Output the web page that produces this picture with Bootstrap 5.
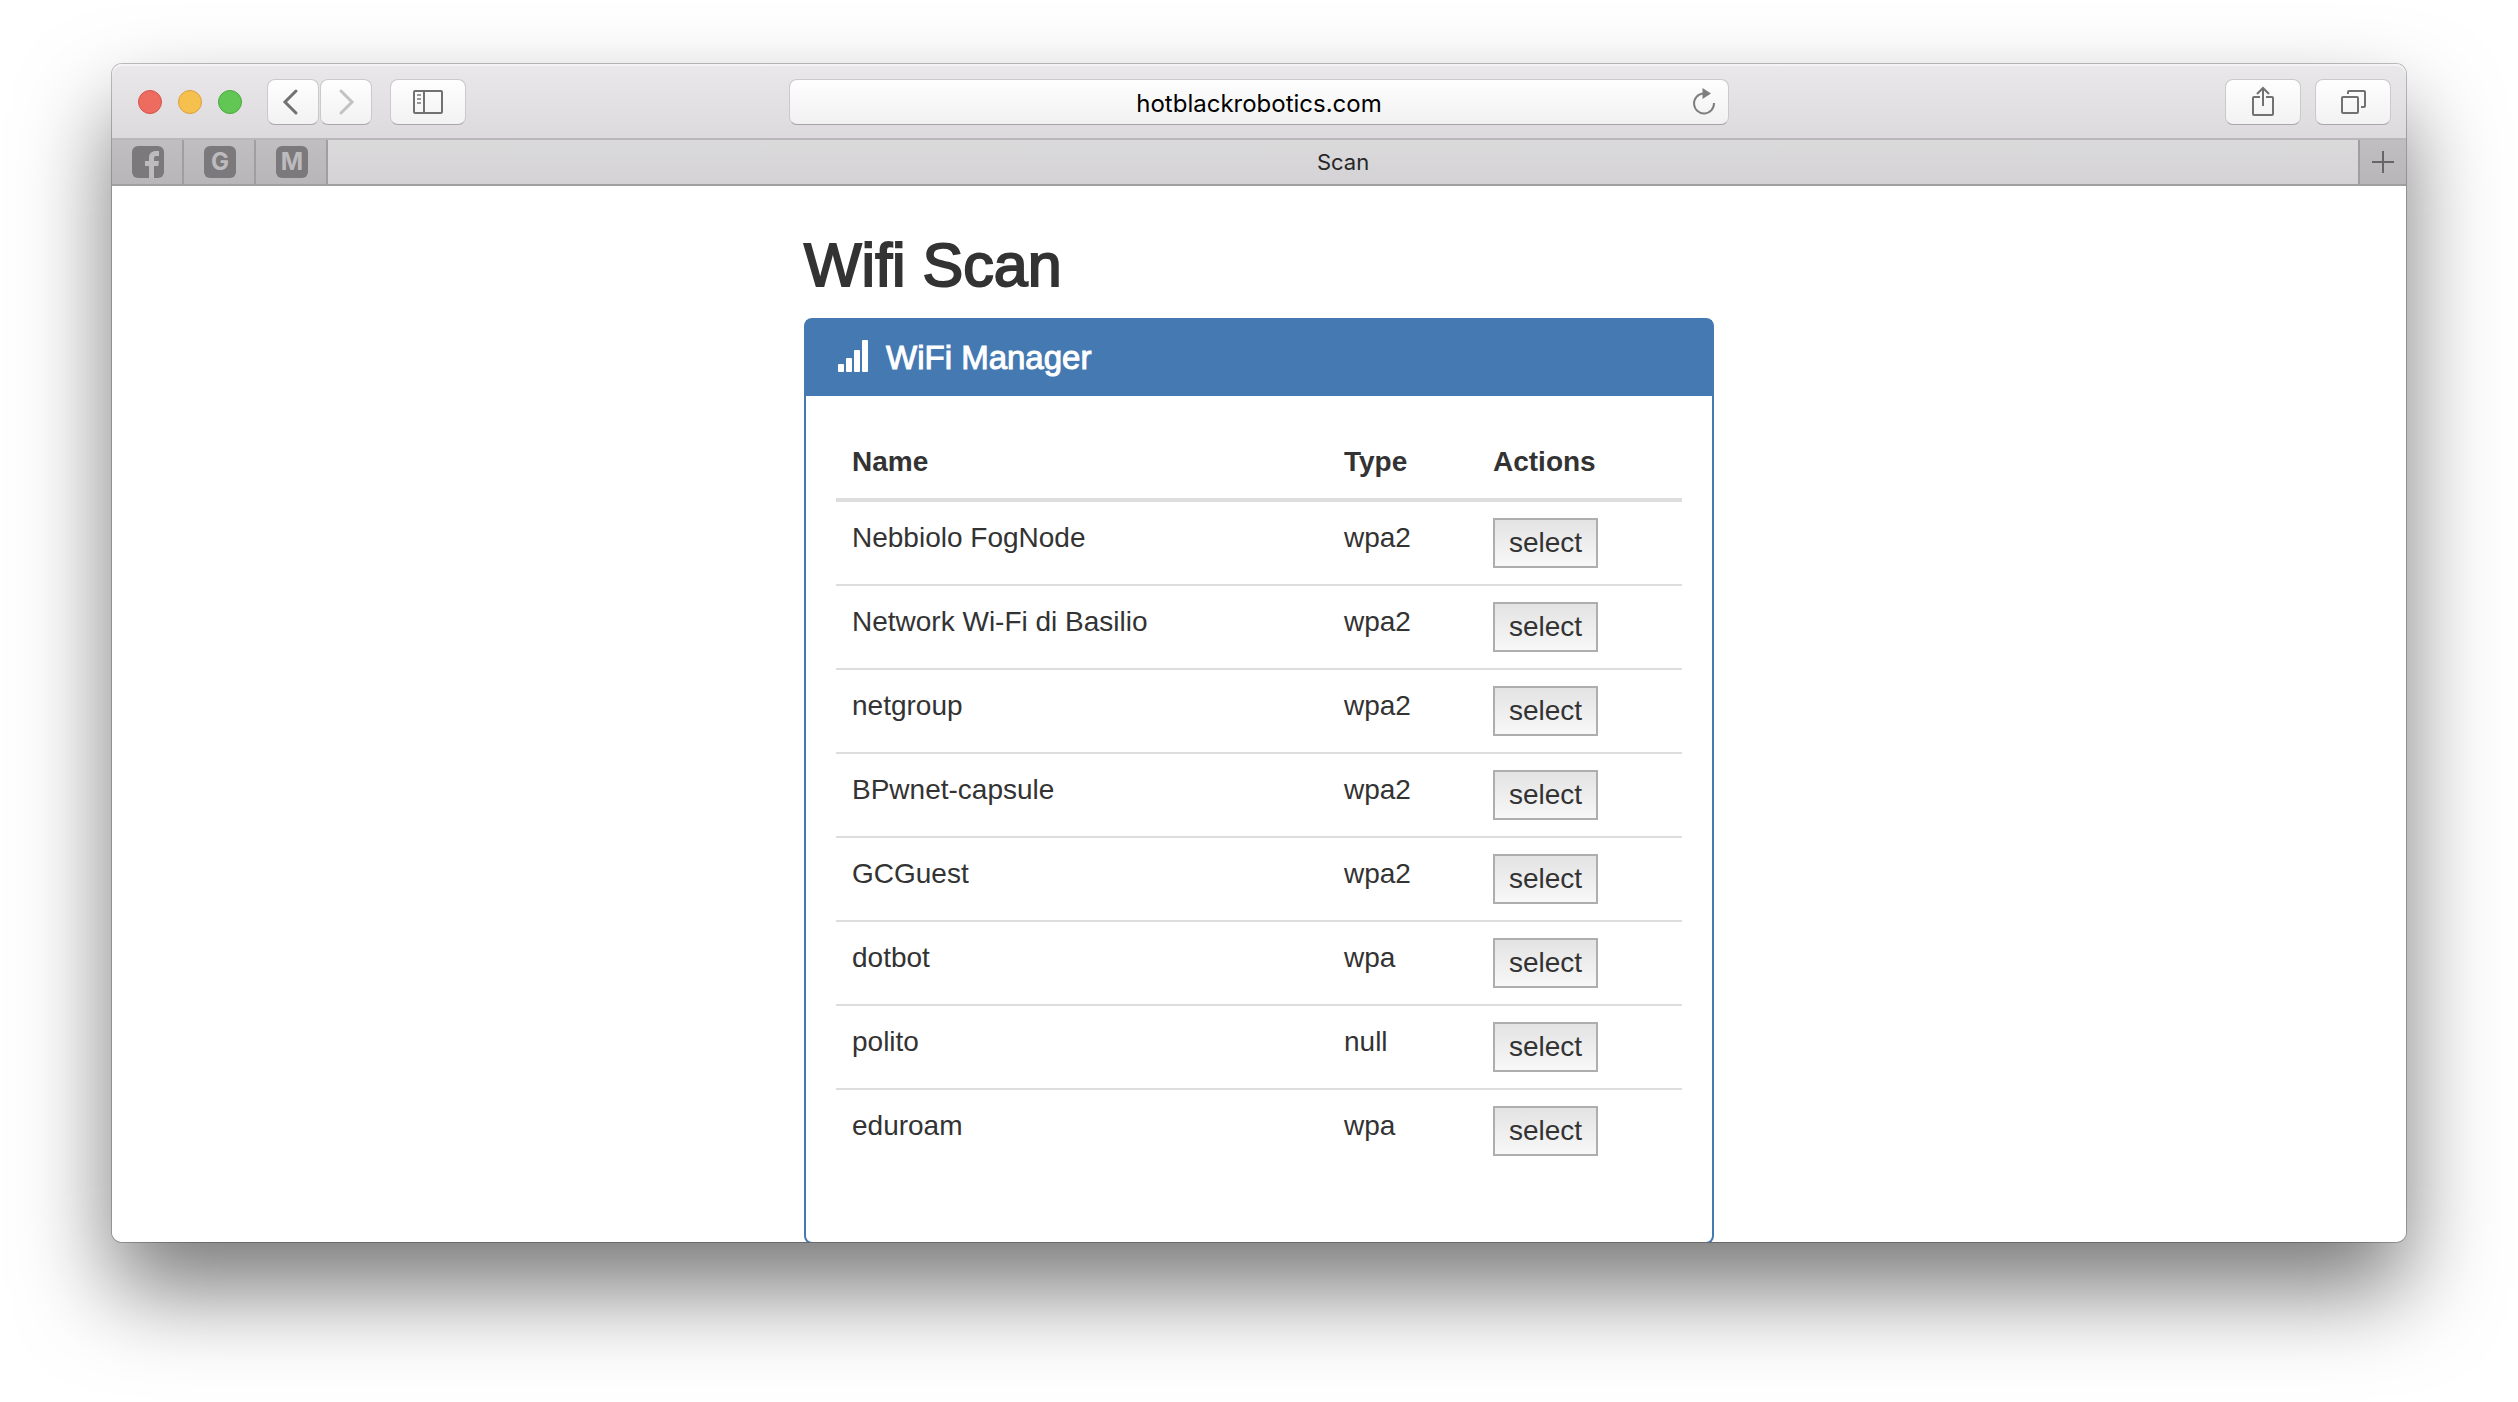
<!DOCTYPE html>
<html lang="en">
<head>
<meta charset="utf-8">
<meta name="viewport" content="width=device-width, initial-scale=1">
<title>Scan</title>
<link href="https://cdn.jsdelivr.net/npm/bootstrap@5.3.0/dist/css/bootstrap.min.css" rel="stylesheet">
<style>
body { background: #fff; padding: 64px 112px 160px; }
.browser { border-radius: 10px; box-shadow: 0 0 0 1px rgba(0,0,0,.24), 0 48px 92px rgba(0,0,0,.53); }
.toolbar { display: grid; grid-template-columns: 1fr 41% 1fr; padding: 15px 0 13px; background: linear-gradient(#eae8eb, #dcdadd); border-bottom: 2px solid #b9b7ba; border-radius: 10px 10px 0 0; box-shadow: inset 0 2px 0 #f4f3f5; }
.lights { gap: 16px; padding-left: 26px; margin-right: 25px; }
.light { width: 24px; height: 24px; border-radius: 50%; border: 1px solid; padding: 0; }
.light-close { background: #ee6b60; border-color: #d5534a; }
.light-min { background: #f6c04f; border-color: #dba03b; }
.light-zoom { background: #62c655; border-color: #4ba83c; }
.nav-pair { gap: 1px; margin-right: 18px; }
.tool-pair { gap: 14px; padding-right: 15px; }
.tool { height: 46px; width: 76px; padding: 0; border: 1px solid #cbc9cc; border-bottom-color: #a9a7aa; border-radius: 8px; background: linear-gradient(#fefefe, #f2f2f2); color: #717171; display: flex; align-items: center; justify-content: center; }
.tool-nav { width: 52px; }
.address { height: 46px; border: 1px solid #cbc9cc; border-bottom-color: #a5a3a6; border-radius: 8px; background: linear-gradient(#fefefe, #f1f1f1); }
.address input { border: 0; background: none; font: 24px/30px Inter, sans-serif; color: #000; text-align: center; min-width: 0; padding: 4px 0 0 48px; }
.address button { width: 48px; border: 0; background: none; padding: 0; }
.tabs { height: 46px; background: linear-gradient(#dbdadb, #d4d2d5); border-bottom: 2px solid #a09ea1; }
.pinned, .newtab { background: linear-gradient(#c0bec1, #b8b6b9); }
.pinned { width: 72px; padding-left: 2px; border-right: 2px solid #a09ea1; }
.newtab { width: 48px; border: 0; border-left: 2px solid #a09ea1; padding: 0; }
.favicon { width: 32px; height: 32px; border-radius: 6px; background: #7b797c; color: #bdbbbe; font: 700 24px/32px Inter, sans-serif; text-align: center; }
.tab-title { font: 22px/30px Inter, sans-serif; color: #272727; text-decoration: none; }
.page { background: #fff; padding-top: 46px; overflow: hidden; border-radius: 0 0 10px 10px; font: 28px/40px "Liberation Sans", Arial, sans-serif; color: #333; }
.page-column { max-width: 910px; }
.page h1 { font-size: 61px; line-height: 66px; margin: 0 0 20px; font-weight: 400; -webkit-text-stroke: 2px #333; font-variant-ligatures: none; }
.wifi-panel { border: 2px solid #4579b2; border-radius: 8px; margin-bottom: -2px; }
.wifi-head { background: #4579b2; color: #fff; padding: 20px 30px; gap: 18px; }
.wifi-head h2 { font-size: 33px; line-height: 36px; font-weight: 400; -webkit-text-stroke: 1px #fff; font-variant-ligatures: none; }
.wifi-body { padding: 30px 30px 70px; }
.wifi-table { width: 100%; table-layout: fixed; border-collapse: separate; border-spacing: 0; }
.wifi-table th, .wifi-table td { padding: 16px; vertical-align: top; }
.wifi-table th { border-bottom: 4px solid #ddd; }
.wifi-table td { border-bottom: 2px solid #ddd; }
.wifi-table tr:last-child td { border-bottom: 0; }
.col-name { width: 492px; }
.col-type { width: 149px; }
.select-btn { display: block; height: 50px; padding: 0 14px; border: 2px solid #aeaeae; background: linear-gradient(#e3e3e3, #f8f8f8); color: #333; line-height: 46px; }
</style>
</head>
<body>
<div class="browser">
  <header class="toolbar">
    <div class="d-flex align-items-center">
      <div class="lights d-flex">
        <button class="light light-close" aria-label="Close"></button>
        <button class="light light-min" aria-label="Minimize"></button>
        <button class="light light-zoom" aria-label="Zoom"></button>
      </div>
      <div class="nav-pair d-flex">
        <button class="tool tool-nav" aria-label="Back"><svg width="24" height="28" viewBox="0 0 24 28" fill="none" stroke="currentColor" stroke-width="3" stroke-linecap="round"><path d="M15 3 4 14l11 11"/></svg></button>
        <button class="tool tool-nav" aria-label="Forward"><svg width="24" height="28" viewBox="0 0 24 28" fill="none" stroke="#c2c2c2" stroke-width="3" stroke-linecap="round"><path d="M7 3l11 11L7 25"/></svg></button>
      </div>
      <button class="tool" aria-label="Sidebar"><svg width="30" height="24" viewBox="0 0 30 24" fill="none" stroke="currentColor" stroke-width="2"><rect x="1" y="1" width="28" height="22" rx="1"/><path d="M11 1v22"/><path d="M4 5h4M4 9h4M4 13h4" stroke="#999"/></svg></button>
    </div>
    <form class="address d-flex">
      <input class="flex-grow-1" type="text" value="hotblackrobotics.com" aria-label="Address">
      <button type="button" aria-label="Reload"><svg width="26" height="30" viewBox="0 0 26 30" fill="none"><path d="M12 6.500a10 10 0 1 0 11 9.500" stroke="#7e7e7e" stroke-width="2"/><path d="M11.500 1v11l8.500-5.500z" fill="#7e7e7e"/></svg></button>
    </form>
    <div class="tool-pair d-flex justify-content-end">
      <button class="tool" aria-label="Share"><svg width="24" height="32" viewBox="0 0 24 32" fill="none" stroke="currentColor" stroke-width="2"><path d="M9 11H3a1 1 0 0 0-1 1v16a1 1 0 0 0 1 1h18a1 1 0 0 0 1-1V12a1 1 0 0 0-1-1h-6M12 20V2M6 8l6-6 6 6"/></svg></button>
      <button class="tool" aria-label="Show all tabs"><svg width="26" height="26" viewBox="0 0 26 26" fill="none" stroke="currentColor" stroke-width="2"><rect x="2" y="8" width="16" height="16" rx="1"/><path d="M8 5V3a1 1 0 0 1 1-1h15a1 1 0 0 1 1 1v14a1 1 0 0 1-1 1h-3"/></svg></button>
    </div>
  </header>
  <nav class="tabs d-flex" aria-label="Tabs">
    <a href="#" class="pinned d-flex align-items-center justify-content-center" aria-label="Facebook"><svg width="32" height="32" viewBox="0 0 32 32"><rect width="32" height="32" rx="6" fill="#7b797c"/><path d="M17 32V20h-4v-5h4v-3c0-5 3-7 7-7h3v5h-2c-2 0-3 .6-3 2.500V15h5l-.7 5H22v12z" fill="#bdbbbe"/></svg></a>
    <a href="#" class="pinned d-flex align-items-center justify-content-center text-decoration-none"><span class="favicon">G</span></a>
    <a href="#" class="pinned d-flex align-items-center justify-content-center text-decoration-none"><span class="favicon">M</span></a>
    <a href="#" class="tab-title flex-grow-1 d-flex align-items-center justify-content-center">Scan</a>
    <button class="newtab" aria-label="New tab"><svg class="d-block mx-auto" width="22" height="22" viewBox="0 0 22 22" stroke="#676568" stroke-width="2"><path d="M11 0v22M0 11h22"/></svg></button>
  </nav>
  <main class="page">
    <div class="page-column mx-auto">
      <h1>Wifi Scan</h1>
      <section class="wifi-panel">
        <div class="wifi-head d-flex align-items-start">
          <svg width="32" height="32" viewBox="0 0 32 32" fill="#fff"><rect x="2" y="24" width="6" height="8" rx="1"/><rect x="10" y="18" width="6" height="14" rx="1"/><rect x="18" y="10" width="6" height="22" rx="1"/><rect x="26" y="0" width="6" height="32" rx="1"/></svg>
          <h2 class="m-0">WiFi Manager</h2>
        </div>
        <div class="wifi-body">
          <table class="wifi-table">
            <thead><tr><th class="col-name">Name</th><th class="col-type">Type</th><th>Actions</th></tr></thead>
            <tbody>
              <tr><td>Nebbiolo FogNode</td><td>wpa2</td><td><button class="select-btn">select</button></td></tr>
              <tr><td>Network Wi-Fi di Basilio</td><td>wpa2</td><td><button class="select-btn">select</button></td></tr>
              <tr><td>netgroup</td><td>wpa2</td><td><button class="select-btn">select</button></td></tr>
              <tr><td>BPwnet-capsule</td><td>wpa2</td><td><button class="select-btn">select</button></td></tr>
              <tr><td>GCGuest</td><td>wpa2</td><td><button class="select-btn">select</button></td></tr>
              <tr><td>dotbot</td><td>wpa</td><td><button class="select-btn">select</button></td></tr>
              <tr><td>polito</td><td>null</td><td><button class="select-btn">select</button></td></tr>
              <tr><td>eduroam</td><td>wpa</td><td><button class="select-btn">select</button></td></tr>
            </tbody>
          </table>
        </div>
      </section>
    </div>
  </main>
</div>
<script src="https://cdn.jsdelivr.net/npm/bootstrap@5.3.0/dist/js/bootstrap.bundle.min.js"></script>
</body>
</html>
